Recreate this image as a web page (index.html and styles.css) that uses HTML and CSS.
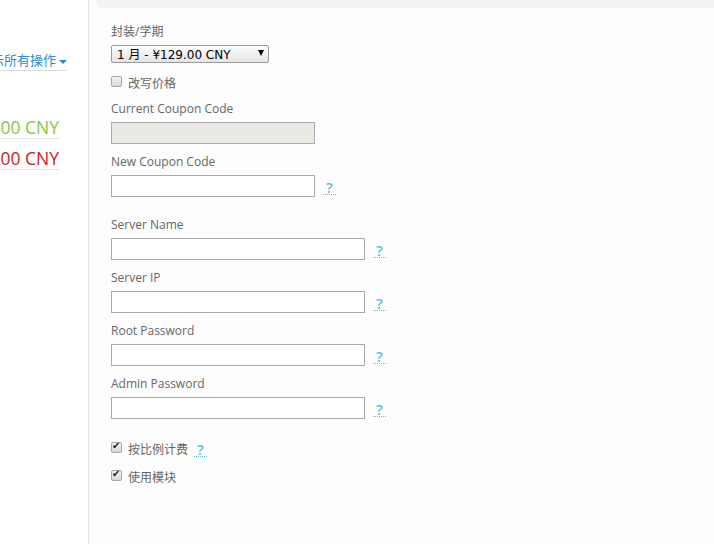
FILE: index.html
```html
<!DOCTYPE html>
<html lang="zh-CN">
<head>
    <meta charset="UTF-8">
    <title>配置产品</title>
    <link rel="stylesheet" href="styles.css">
</head>
<body>
    <div class="page">
        <div class="sidebar">
            <div class="side-line actions">
                <a href="#" class="action-link">显示所有操作<span class="caret"></span></a>
            </div>
            <div class="side-line amount green">¥129.00 CNY</div>
            <div class="side-line amount red">¥129.00 CNY</div>
        </div>

        <div class="main">
            <div class="top-bar"></div>

            <div class="form">
                <div class="field">
                    <label class="label">封装/学期</label>
                    <span class="select-wrap">
                        <select class="cycle">
                            <option>1 月 - ¥129.00 CNY</option>
                        </select>
                    </span>
                </div>

                <div class="check-row">
                    <input type="checkbox" class="check" id="overridePrice">
                    <label for="overridePrice">改写价格</label>
                </div>

                <div class="field">
                    <label class="label">Current Coupon Code</label>
                    <input type="text" class="text-input short" disabled>
                </div>

                <div class="field">
                    <label class="label">New Coupon Code</label>
                    <div class="input-row">
                        <input type="text" class="text-input short">
                        <a href="#" class="help">?</a>
                    </div>
                </div>

                <div class="section">
                    <div class="field">
                        <label class="label">Server Name</label>
                        <div class="input-row">
                            <input type="text" class="text-input">
                            <a href="#" class="help">?</a>
                        </div>
                    </div>
                    <div class="field">
                        <label class="label">Server IP</label>
                        <div class="input-row">
                            <input type="text" class="text-input">
                            <a href="#" class="help">?</a>
                        </div>
                    </div>
                    <div class="field">
                        <label class="label">Root Password</label>
                        <div class="input-row">
                            <input type="text" class="text-input">
                            <a href="#" class="help">?</a>
                        </div>
                    </div>
                    <div class="field">
                        <label class="label">Admin Password</label>
                        <div class="input-row">
                            <input type="text" class="text-input">
                            <a href="#" class="help">?</a>
                        </div>
                    </div>
                </div>

                <div class="checks">
                    <div class="check-row">
                        <input type="checkbox" class="check" id="prorata" checked>
                        <label for="prorata">按比例计费</label>
                        <a href="#" class="help small">?</a>
                    </div>
                    <div class="check-row">
                        <input type="checkbox" class="check" id="useModule" checked>
                        <label for="useModule">使用模块</label>
                    </div>
                </div>
            </div>
        </div>
    </div>
</body>
</html>
```

FILE: styles.css
```css
body {
    margin: 0;
    background: #fdfdfd;
    font-family: "Open Sans", "Noto Sans CJK SC", sans-serif;
    font-size: 12px;
    color: #666;
}
.page {
    display: flex;
    min-height: 544px;
}

/* left column */
.sidebar {
    width: 89px;
    flex: none;
    background: #fff;
    border-right: 1px solid #e6e6e6;
    padding-top: 50px;
    box-sizing: border-box;
}
.side-line {
    display: flex;
    justify-content: flex-end;
    overflow: hidden;
    white-space: nowrap;
}
.actions {
    width: 67px;
    height: 20px;
    border-bottom: 1px solid #ddd;
}
.action-link {
    color: #2a8ccb;
    text-decoration: none;
    font-size: 13px;
    line-height: 20px;
}
.caret {
    display: inline-block;
    margin-left: 3px;
    vertical-align: middle;
    border-left: 4px solid transparent;
    border-right: 4px solid transparent;
    border-top: 4px solid #2a8ccb;
}
.amount {
    width: 59px;
    font-size: 17.5px;
    line-height: 22px;
    border-bottom: 1px dotted #ccc;
}
.green {
    margin-top: 45px;
    color: #8dc63f;
}
.red {
    margin-top: 8px;
    color: #cc2222;
}

/* right column */
.main {
    flex: 1;
    padding-left: 7px;
}
.top-bar {
    height: 8px;
    background: #f3f3f3;
    border-bottom-left-radius: 6px;
}
.form {
    padding: 15px 0 0 15px;
}
.field {
    margin-bottom: 9px;
}
.label {
    display: block;
    line-height: 18px;
    margin-bottom: 4px;
}
.select-wrap {
    position: relative;
    display: inline-block;
}
.select-wrap::after {
    content: "";
    position: absolute;
    right: 5px;
    top: 5px;
    border-left: 3px solid transparent;
    border-right: 3px solid transparent;
    border-top: 6px solid #000;
    pointer-events: none;
}
.cycle {
    appearance: none;
    -webkit-appearance: none;
    display: block;
    width: 158px;
    height: 18px;
    margin: 0;
    padding: 1px 0 0 5px;
    border: 1px solid #9a9a9a;
    border-radius: 2px;
    background: linear-gradient(#fdfdfd, #e4e4e4);
    font-family: "DejaVu Sans", "Noto Sans CJK SC", sans-serif;
    font-size: 12px;
    color: #000;
}
.check-row {
    display: flex;
    align-items: center;
    height: 18px;
    margin: 11px 0 8px;
}
.check {
    appearance: none;
    -webkit-appearance: none;
    width: 11px;
    height: 11px;
    margin: 0 6px 0 0;
    border: 1px solid #a8a8a8;
    border-radius: 2px;
    background: linear-gradient(#f4f4f4, #d8d8d8);
    position: relative;
    top: -2px;
    box-sizing: border-box;
}
.check:checked::after {
    content: "✔";
    position: absolute;
    left: 0;
    top: -3px;
    font-family: "DejaVu Sans", sans-serif;
    font-size: 10px;
    color: #222;
}
.text-input {
    display: block;
    width: 254px;
    height: 22px;
    margin: 0;
    box-sizing: border-box;
    border: 1px solid #aaa;
    background: #fff;
    padding: 2px 4px;
}
.text-input.short {
    width: 204px;
}
.text-input:disabled {
    background: #ebe9e3;
}
.input-row {
    display: flex;
    align-items: center;
}
.help {
    margin-left: 8px;
    padding: 0 3px;
    color: #5bbde0;
    font-size: 15px;
    font-weight: 600;
    line-height: 14px;
    text-decoration: none;
    border-bottom: 1px dotted #5bbde0;
    position: relative;
    top: 1px;
}
.help.small {
    margin-left: 6px;
    top: 0;
}
.section {
    margin-top: 19px;
}
.checks {
    margin-top: 21px;
}
.checks .check-row {
    margin: 0 0 10px;
}
```
